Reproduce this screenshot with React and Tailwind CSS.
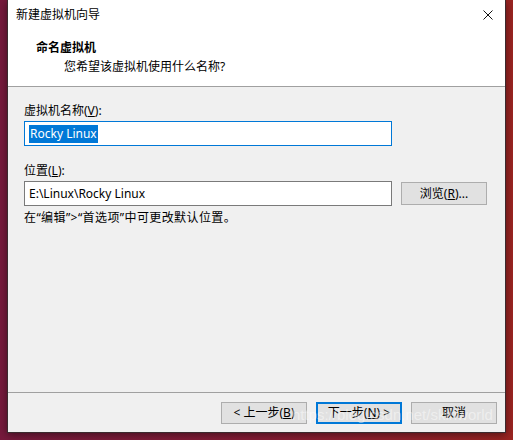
import React from 'react';

const font = { fontFamily: '"Noto Sans", "Noto Sans CJK SC", sans-serif' };

const Btn = ({ children, primary }) => (
  <button
    className={
      primary
        ? 'w-[86px] h-[22px] bg-[#e1e1e1] border-2 border-[#0078d7] text-[12px] leading-none text-black'
        : 'w-[86px] h-[22px] bg-[#e1e1e1] border border-[#adadad] text-[12px] leading-none text-black'
    }
  >
    {children}
  </button>
);

const App = () => {
  return (
    <div
      className="relative w-[513px] h-[440px] overflow-hidden bg-gradient-to-r from-[#761a3c] via-[#861c35] to-[#9a2421] text-black"
      style={font}
    >
      <div className="ml-[7px] w-[499px] h-[433px] flex flex-col border-x border-b border-[#3b2a2e] shadow-[0_2px_8px_rgba(0,0,0,0.45)]">
        {/* title bar */}
        <div className="h-[30px] bg-white flex items-center justify-between pl-[8px] pr-[10px]">
          <span className="text-[12px]">新建虚拟机向导</span>
          <svg width="10" height="10" viewBox="0 0 10 10" className="mr-[2px]">
            <path d="M0.5 0.5 L9.5 9.5 M9.5 0.5 L0.5 9.5" stroke="#111" strokeWidth="1" />
          </svg>
        </div>

        {/* header */}
        <div className="h-[57px] bg-white border-b border-[#a0a0a0] pt-[10px]">
          <div className="pl-[28px] text-[12px] font-bold leading-[16px]">命名虚拟机</div>
          <div className="pl-[56px] text-[12px] leading-[16px] mt-[3px]">您希望该虚拟机使用什么名称?</div>
        </div>

        {/* body */}
        <div className="flex-1 bg-[#f0f0f0] flex flex-col">
          <div className="flex-1 pl-[16px] pt-[16px]">
            <div className="text-[12px] leading-[16px]">
              虚拟机名称(<span className="underline">V</span>):
            </div>
            <div className="mt-[2px] w-[368px] h-[25px] bg-white border border-[#0078d7] flex items-center pl-[4px]">
              <span className="bg-[#0078d7] text-white text-[12px] leading-[18px] px-[1px]">Rocky Linux</span>
            </div>

            <div className="mt-[17px] text-[12px] leading-[16px]">
              位置(<span className="underline">L</span>):
            </div>
            <div className="mt-[2px] flex items-center gap-[9px]">
              <div className="w-[368px] h-[25px] bg-white border border-[#7a7a7a] flex items-center pl-[4px] text-[12px]">
                E:\Linux\Rocky Linux
              </div>
              <button className="w-[86px] h-[23px] bg-[#e1e1e1] border border-[#adadad] text-[12px] leading-none">
                浏览(<span className="underline">R</span>)...
              </button>
            </div>
            <div className="mt-[4px] text-[12px] leading-[16px] tracking-[0.4px]">
              在“编辑”&gt;“首选项”中可更改默认位置。
            </div>
          </div>

          <div className="h-[40px] border-t border-[#a0a0a0] flex justify-end items-start pt-[9px] pr-[8px] gap-[9px]">
            <Btn>
              &lt; 上一步(<span className="underline">B</span>)
            </Btn>
            <Btn primary>
              下一步(<span className="underline">N</span>) &gt;
            </Btn>
            <Btn>取消</Btn>
          </div>
        </div>
      </div>

      <div
        className="absolute left-[292px] top-[404px] text-[15px] text-white/45 whitespace-nowrap pointer-events-none"
        style={{ fontFamily: '"Liberation Sans", sans-serif' }}
      >
        https://blog.csdn.net/skinworld
      </div>
    </div>
  );
};

export default App;
